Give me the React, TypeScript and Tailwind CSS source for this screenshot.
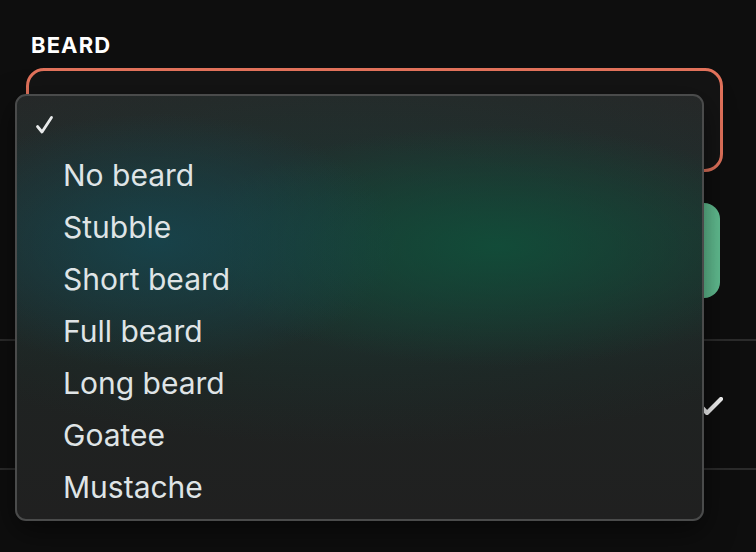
import { useState } from "react";

const beardOptions = ["No beard", "Stubble", "Short beard", "Full beard", "Long beard", "Goatee", "Mustache"];

function CheckThin() {
  return (
    <svg width="19" height="20" viewBox="0 0 19 20" fill="none">
      <path d="M2.5 11.5 L7 17 L16.5 2.5" stroke="#e8eaeb" strokeWidth="2.8" strokeLinecap="round" strokeLinejoin="round" />
    </svg>
  );
}

function CheckHeavy() {
  return (
    <svg width="24" height="18" viewBox="0 0 24 18" fill="none">
      <path d="M2.5 10 L8 16 L22 2" stroke="#f6f6f6" strokeWidth="4.2" strokeLinecap="round" strokeLinejoin="round" />
    </svg>
  );
}

export default function App() {
  const [selected] = useState<string | null>(null);

  return (
    <div className="relative h-[552px] w-[756px] overflow-hidden bg-[#0e0e0e] font-['Inter',sans-serif]">
      <div className="px-[26px] pt-[33px]">
        <div className="pl-[5px] text-[22px] font-bold leading-[24px] tracking-[0.05em] text-white">BEARD</div>
        <div className="mt-[11px] h-[104px] w-[697px] rounded-[18px] border-[3px] border-[#e2725b] bg-[#141414]" />
        <div className="ml-[3px] mt-[31px] h-[95px] w-[691px] rounded-[16px] bg-gradient-to-r from-[#4fae83] to-[#62bf92]" />
      </div>

      <div className="mt-[41px] flex h-[131px] items-center justify-end border-y-2 border-[#2b2b2b] pr-[33px]">
        <div className="mt-[3px]">
          <CheckHeavy />
        </div>
      </div>

      {/* open native-style menu */}
      <div
        className="absolute left-[15px] top-[94px] h-[427px] w-[689px] overflow-hidden rounded-[11px] border-2 border-[#4a4b4b] shadow-[0_10px_30px_rgba(0,0,0,0.5)]"
        style={{
          background:
            "radial-gradient(ellipse 320px 170px at 140px 145px, rgba(22,70,80,0.8), transparent 75%), radial-gradient(ellipse 420px 160px at 480px 150px, rgba(16,80,58,0.85), transparent 75%), radial-gradient(ellipse 680px 250px at 340px 150px, rgba(24,62,56,0.6), transparent 80%), linear-gradient(180deg, #262828 0%, #22292a 30%, #1f2322 65%, #202020 100%)",
        }}
      >
        <div className="pt-[1px]">
          <div className="flex h-[52px] items-center pl-[18px] pt-[4px]">
            {selected === null && <CheckThin />}
          </div>
          {beardOptions.map((option) => (
            <div key={option} className="h-[52px] pl-[46px] text-[30px] leading-[52px] text-[#dfe4e6]">
              {option}
            </div>
          ))}
        </div>
      </div>
    </div>
  );
}
